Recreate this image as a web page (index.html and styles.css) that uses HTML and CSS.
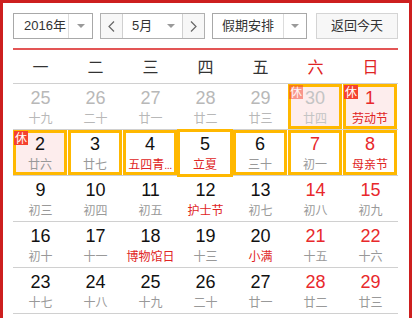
FILE: index.html
```html
<!DOCTYPE html>
<html lang="zh-CN">
<head>
<meta charset="utf-8">
<title>万年历</title>
<link rel="stylesheet" href="styles.css">
</head>
<body>
<div class="frame">
  <div class="toolbar">
    <div class="select year">
      <span class="sel-text">2016年</span>
      <span class="sel-arrow"><i class="tri"></i></span>
    </div>
    <div class="month-group">
      <span class="nav"><svg width="7" height="11" viewBox="0 0 7 11"><polyline points="6,0.5 1,5.5 6,10.5" fill="none" stroke="#666" stroke-width="1.2"/></svg></span>
      <span class="month-mid"><span class="month-text">5月</span><i class="tri"></i></span>
      <span class="nav"><svg width="7" height="11" viewBox="0 0 7 11"><polyline points="1,0.5 6,5.5 1,10.5" fill="none" stroke="#666" stroke-width="1.2"/></svg></span>
    </div>
    <div class="select holiday">
      <span class="sel-text">假期安排</span>
      <span class="sel-arrow"><i class="tri"></i></span>
    </div>
    <div class="today-btn">返回今天</div>
  </div>

  <div class="weekhead">
    <span>一</span><span>二</span><span>三</span><span>四</span><span>五</span><span class="we">六</span><span class="we">日</span>
  </div>

  <div class="row">
    <div class="cell out"><div class="num">25</div><div class="lun">十九</div></div>
    <div class="cell out"><div class="num">26</div><div class="lun">二十</div></div>
    <div class="cell out"><div class="num">27</div><div class="lun">廿一</div></div>
    <div class="cell out"><div class="num">28</div><div class="lun">廿二</div></div>
    <div class="cell out"><div class="num">29</div><div class="lun">廿三</div></div>
    <div class="cell out sel rest"><span class="badge faded">休</span><div class="num">30</div><div class="lun">廿四</div></div>
    <div class="cell sel rest we"><span class="badge">休</span><div class="num">1</div><div class="lun hol">劳动节</div></div>
  </div>

  <div class="row">
    <div class="cell sel rest"><span class="badge">休</span><div class="num">2</div><div class="lun">廿六</div></div>
    <div class="cell sel"><div class="num">3</div><div class="lun">廿七</div></div>
    <div class="cell sel"><div class="num">4</div><div class="lun hol" title="五四青年节">五四青<span class="dots">...</span></div></div>
    <div class="cell sel today"><div class="num">5</div><div class="lun hol">立夏</div></div>
    <div class="cell sel"><div class="num">6</div><div class="lun">三十</div></div>
    <div class="cell sel we"><div class="num">7</div><div class="lun">初一</div></div>
    <div class="cell sel we"><div class="num">8</div><div class="lun hol">母亲节</div></div>
  </div>

  <div class="row">
    <div class="cell"><div class="num">9</div><div class="lun">初三</div></div>
    <div class="cell"><div class="num">10</div><div class="lun">初四</div></div>
    <div class="cell"><div class="num">11</div><div class="lun">初五</div></div>
    <div class="cell"><div class="num">12</div><div class="lun hol">护士节</div></div>
    <div class="cell"><div class="num">13</div><div class="lun">初七</div></div>
    <div class="cell we"><div class="num">14</div><div class="lun">初八</div></div>
    <div class="cell we"><div class="num">15</div><div class="lun">初九</div></div>
  </div>

  <div class="row">
    <div class="cell"><div class="num">16</div><div class="lun">初十</div></div>
    <div class="cell"><div class="num">17</div><div class="lun">十一</div></div>
    <div class="cell"><div class="num">18</div><div class="lun hol">博物馆日</div></div>
    <div class="cell"><div class="num">19</div><div class="lun">十三</div></div>
    <div class="cell"><div class="num">20</div><div class="lun hol">小满</div></div>
    <div class="cell we"><div class="num">21</div><div class="lun">十五</div></div>
    <div class="cell we"><div class="num">22</div><div class="lun">十六</div></div>
  </div>

  <div class="row">
    <div class="cell"><div class="num">23</div><div class="lun">十七</div></div>
    <div class="cell"><div class="num">24</div><div class="lun">十八</div></div>
    <div class="cell"><div class="num">25</div><div class="lun">十九</div></div>
    <div class="cell"><div class="num">26</div><div class="lun">二十</div></div>
    <div class="cell"><div class="num">27</div><div class="lun">廿一</div></div>
    <div class="cell we"><div class="num">28</div><div class="lun">廿二</div></div>
    <div class="cell we"><div class="num">29</div><div class="lun">廿三</div></div>
  </div>
</div>
</body>
</html>
```

FILE: styles.css
```css
html, body {
  margin: 0;
  padding: 0;
  background: #fff;
  overflow: hidden;
}

body {
  font-family: "Liberation Sans", "Noto Sans CJK SC", Arial, sans-serif;
  color: #333;
}

.frame {
  width: 385px;
  height: 320px;
  border: 3px solid #cd1f1f;
  border-bottom: none;
  padding: 10px 11px 0 10px;
}

/* toolbar */
.toolbar {
  display: flex;
  height: 26px;
  margin-bottom: 9px;
  font-size: 13px;
}

.select {
  display: flex;
  box-sizing: border-box;
  height: 26px;
  border: 1px solid #a8a8a8;
  background: #fff;
}

.year { width: 80px; margin-right: 7px; }
.year .sel-text { width: 54px; padding-left: 10px; box-sizing: border-box; }

.holiday { width: 95px; margin-right: 9px; }
.holiday .sel-text { width: 70px; text-align: center; }

.sel-text {
  line-height: 24px;
  color: #333;
  white-space: nowrap;
}

.sel-arrow {
  flex: 1;
  border-left: 1px solid #dcdcdc;
  display: flex;
  align-items: center;
  justify-content: center;
}

.tri {
  display: block;
  width: 0;
  height: 0;
  border-left: 4px solid transparent;
  border-right: 4px solid transparent;
  border-top: 4px solid #9a9a9a;
}

.month-group {
  display: flex;
  box-sizing: border-box;
  width: 105px;
  height: 26px;
  margin-right: 7px;
  border: 1px solid #b0b0b0;
}

.nav {
  width: 21px;
  background: #f7f7f7;
  display: flex;
  align-items: center;
  justify-content: center;
}

.month-mid {
  border-left: 1px solid #d0d0d0;
  border-right: 1px solid #d0d0d0;
  display: flex;
  align-items: center;
  padding: 0 7px 0 9px;
  box-sizing: content-box;
  width: 43px;
  justify-content: space-between;
  background: #fff;
}

.month-text { line-height: 24px; }

.today-btn {
  box-sizing: border-box;
  width: 82px;
  height: 26px;
  line-height: 24px;
  text-align: center;
  border: 1px solid #d4d4d4;
  background: #f7f7f7;
  color: #333;
}

/* week header */
.weekhead {
  display: grid;
  grid-template-columns: repeat(7, 55px);
  border-top: 2px solid #e35555;
  border-bottom: 1px solid #d0d0d0;
  height: 30px;
  padding-top: 3px;
  font-size: 16px;
  line-height: 30px;
  text-align: center;
  color: #333;
}

.weekhead .we { color: #e02424; }

/* day rows */
.row {
  display: grid;
  grid-template-columns: repeat(7, 55px);
  height: 45px;
  border-bottom: 1px solid #d0d0d0;
}

.cell {
  position: relative;
  text-align: center;
  padding-top: 3px;
  box-sizing: border-box;
}

.num {
  font-size: 18px;
  line-height: 22px;
  color: #111;
}

.lun {
  font-size: 12px;
  line-height: 17px;
  margin-top: 2px;
  color: #999;
  white-space: nowrap;
}

.dots {
  font-family: "Liberation Sans", sans-serif;
  font-size: 11px;
  letter-spacing: -0.5px;
}

.we .num { color: #e8282c; }
.lun.hol { color: #e02424; }

.out .num, .out .lun { color: #b8b8b8; }
.rest.out .num, .rest.out .lun { color: #c4c4c4; }

.sel {
  margin-right: 1px;
  box-shadow: inset 0 0 0 3px #ffb800;
  background: #fff;
}

.rest { background: #fdeded; }

.today {
  margin: -1px 0 -2px -1px;
  padding-top: 4px;
}

.badge {
  position: absolute;
  top: 1px;
  left: 1px;
  width: 14px;
  height: 14px;
  background: #f5412d;
  color: #fff;
  font-size: 12px;
  line-height: 14px;
  text-align: center;
  font-family: "Noto Sans CJK SC", sans-serif;
}

.badge.faded { opacity: 0.5; }
```
